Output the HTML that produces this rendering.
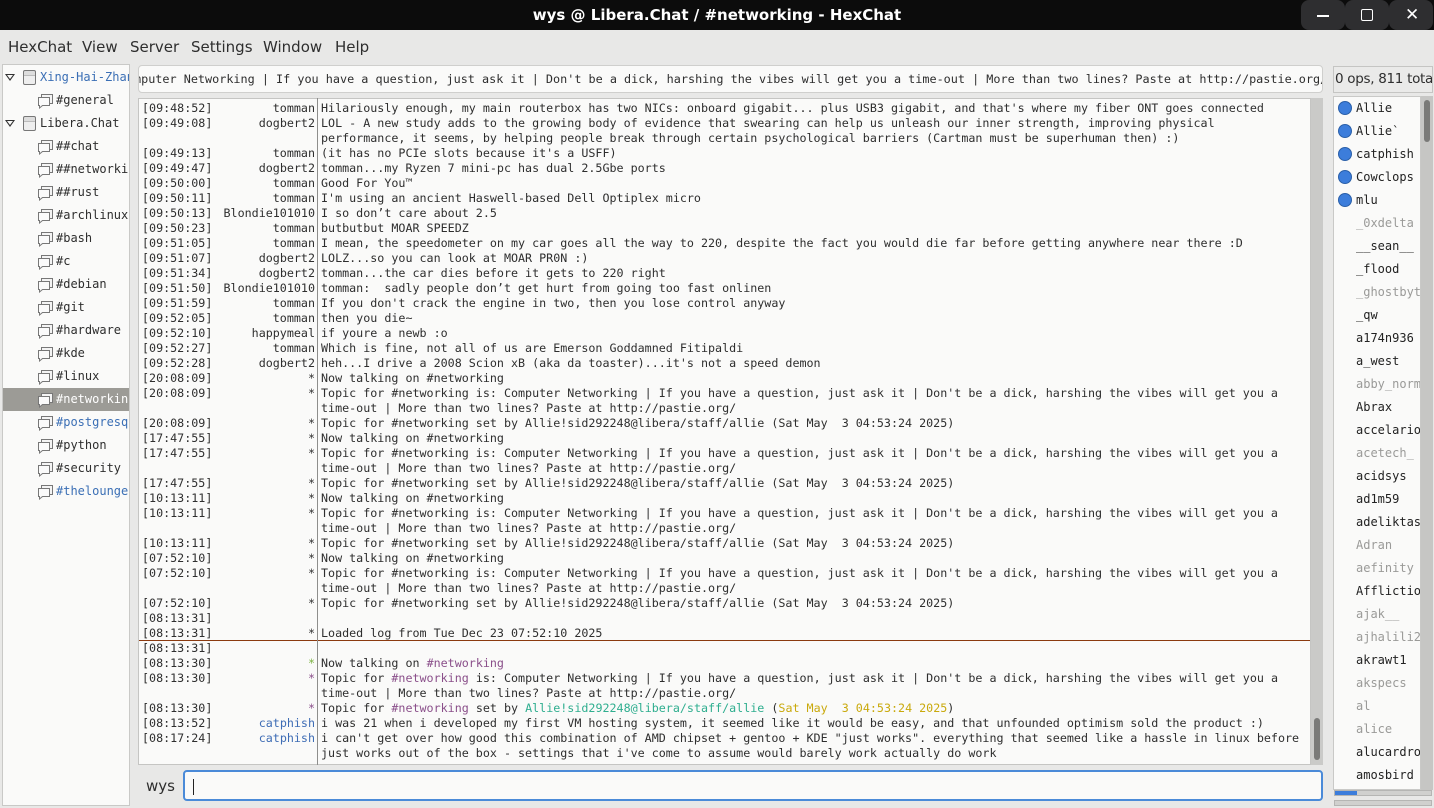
<!DOCTYPE html>
<html><head><meta charset="utf-8">
<style>
*{box-sizing:border-box;margin:0;padding:0}
body{width:1434px;height:808px;background:#e8e8e7;position:relative;overflow:hidden;font-family:"DejaVu Sans","Liberation Sans",sans-serif;color:#2e2e2e}
.abs{position:absolute}
.mono{font-family:"DejaVu Sans Mono","Liberation Mono",monospace;font-size:11.7px;white-space:pre}
#title{left:0;top:0;width:1434px;height:30px;background:#0c0c0c;color:#fff;font-size:15px;font-weight:bold;text-align:center;line-height:30px}
.wb{top:0;width:44px;height:30px;background:#2e2e30;border-radius:8px}
#menu{top:31px;left:0;width:1434px;height:32px;font-size:15px;line-height:32px}
#menu span{position:absolute;top:0}
#tree{left:2px;top:64px;width:128px;height:742px;background:#fafaf9;border:1px solid #c9c9c7;overflow:hidden}
.tr{position:absolute;left:0;width:126px;height:23px;line-height:23px;font-family:"DejaVu Sans Mono",monospace;font-size:12px;white-space:nowrap;overflow:hidden}
.bub{position:absolute;left:34px;top:4px}
#topic{left:138px;top:65px;width:1185px;height:28px;background:#fafaf9;border:1px solid #cfcfcd;border-radius:4px;line-height:27px;overflow:hidden}
#chat{left:138px;top:98px;width:1173px;height:667px;background:#fafaf9;border:1px solid #c5c5c3;overflow:hidden}
#vsep{left:317px;top:98px;width:1px;height:667px;background:#8e8e8c}
#csb{left:1311px;top:98px;width:12px;height:667px;background:#cacac8}
.row{position:absolute;left:0;width:1171px;height:15px;line-height:15px}
.t{position:absolute;left:3px}
.n{position:absolute;right:995px;text-align:right}
.m{position:absolute;left:182px}
#ulist{left:1333px;top:96px;width:88px;height:694px;background:#fafaf9;border:1px solid #c9c9c7;overflow:hidden}
.u{position:absolute;left:22px;height:23px;line-height:23px;font-family:"DejaVu Sans Mono",monospace;font-size:12px;white-space:nowrap}
.dot{position:absolute;left:4px;width:14px;height:14px;border-radius:50%;background:#3c7ddb;border:1px solid #2a5fa8}
.g{color:#9a9a98}.k{color:#222}
.arr{position:absolute;left:2px;top:8px;width:0;height:0;border-left:5px solid transparent;border-right:5px solid transparent;border-top:7px solid #333}
.arr::after{content:"";position:absolute;left:-3px;top:-6px;border-left:3px solid transparent;border-right:3px solid transparent;border-top:4px solid #fafaf9}
.srv{position:absolute;left:20px;top:4px;width:13px;height:15px;border:1px solid #777;border-radius:2px;background:linear-gradient(#ddd 0 4px,#bbb 4px 5px,#eee 5px)}
</style></head><body>
<div id="title" class="abs">wys @ Libera.Chat / #networking - HexChat</div>
<div class="abs wb" style="left:1301px"></div><div class="abs wb" style="left:1345px"></div><div class="abs wb" style="left:1389px"></div>
<div class="abs" style="left:1317px;top:15px;width:12px;height:1.5px;background:#fff"></div>
<div class="abs" style="left:1361px;top:9px;width:12px;height:12px;border:1.5px solid #fff;border-radius:2px"></div>
<div class="abs" style="left:1405px;top:5px;color:#fff;font-size:17px;line-height:20px">✕</div>
<div id="menu" class="abs"><span style="left:8px">HexChat</span><span style="left:82px">View</span><span style="left:130px">Server</span><span style="left:191px">Settings</span><span style="left:263px">Window</span><span style="left:335px">Help</span></div>

<svg width="0" height="0" style="position:absolute"><defs><symbol id="b" viewBox="0 0 17 16"><path d="M4.5 1.5h11v9h-11z" fill="#f4f4f4" stroke="#777"/><path d="M1.5 4.5h11v8h-7l-3 2.5v-2.5h-1z" fill="#fafafa" stroke="#777"/></symbol></defs></svg>

<div id="tree" class="abs">
<div class="tr" style="top:1px"><div class="arr"></div><div class="srv"></div><span class="abs" style="left:37px;color:#3b6fb5">Xing-Hai-Zhang</span></div>
<div class="tr" style="top:24px"><svg class="bub" width="17" height="16"><use href="#b"/></svg><span class="abs" style="left:53px">#general</span></div>
<div class="tr" style="top:47px"><div class="arr"></div><div class="srv"></div><span class="abs" style="left:37px">Libera.Chat</span></div>
<div class="tr" style="top:70px"><svg class="bub" width="17" height="16"><use href="#b"/></svg><span class="abs" style="left:53px">##chat</span></div>
<div class="tr" style="top:93px"><svg class="bub" width="17" height="16"><use href="#b"/></svg><span class="abs" style="left:53px">##networking</span></div>
<div class="tr" style="top:116px"><svg class="bub" width="17" height="16"><use href="#b"/></svg><span class="abs" style="left:53px">##rust</span></div>
<div class="tr" style="top:139px"><svg class="bub" width="17" height="16"><use href="#b"/></svg><span class="abs" style="left:53px">#archlinux</span></div>
<div class="tr" style="top:162px"><svg class="bub" width="17" height="16"><use href="#b"/></svg><span class="abs" style="left:53px">#bash</span></div>
<div class="tr" style="top:185px"><svg class="bub" width="17" height="16"><use href="#b"/></svg><span class="abs" style="left:53px">#c</span></div>
<div class="tr" style="top:208px"><svg class="bub" width="17" height="16"><use href="#b"/></svg><span class="abs" style="left:53px">#debian</span></div>
<div class="tr" style="top:231px"><svg class="bub" width="17" height="16"><use href="#b"/></svg><span class="abs" style="left:53px">#git</span></div>
<div class="tr" style="top:254px"><svg class="bub" width="17" height="16"><use href="#b"/></svg><span class="abs" style="left:53px">#hardware</span></div>
<div class="tr" style="top:277px"><svg class="bub" width="17" height="16"><use href="#b"/></svg><span class="abs" style="left:53px">#kde</span></div>
<div class="tr" style="top:300px"><svg class="bub" width="17" height="16"><use href="#b"/></svg><span class="abs" style="left:53px">#linux</span></div>
<div class="tr" style="top:323px;background:#9c9b96;color:#fff"><svg class="bub" width="17" height="16"><use href="#b"/></svg><span class="abs" style="left:53px">#networking</span></div>
<div class="tr" style="top:346px"><svg class="bub" width="17" height="16"><use href="#b"/></svg><span class="abs" style="left:53px;color:#3b6fb5">#postgresql</span></div>
<div class="tr" style="top:369px"><svg class="bub" width="17" height="16"><use href="#b"/></svg><span class="abs" style="left:53px">#python</span></div>
<div class="tr" style="top:392px"><svg class="bub" width="17" height="16"><use href="#b"/></svg><span class="abs" style="left:53px">#security</span></div>
<div class="tr" style="top:415px"><svg class="bub" width="17" height="16"><use href="#b"/></svg><span class="abs" style="left:53px;color:#3b6fb5">#thelounge</span></div>
</div>

<div id="topic" class="abs mono"><span style="position:absolute;left:-5px;top:0;font-size:11.8px">mputer Networking | If you have a question, just ask it | Don't be a dick, harshing the vibes will get you a time-out | More than two lines? Paste at http://pastie.org/</span></div>

<div id="chat" class="abs mono">
<div class="row" style="top:2px"><span class="t">[09:48:52]</span><span class="n">tomman</span><span class="m">Hilariously enough, my main routerbox has two NICs: onboard gigabit... plus USB3 gigabit, and that's where my fiber ONT goes connected</span></div>
<div class="row" style="top:17px"><span class="t">[09:49:08]</span><span class="n">dogbert2</span><span class="m">LOL - A new study adds to the growing body of evidence that swearing can help us unleash our inner strength, improving physical</span></div>
<div class="row" style="top:32px"><span class="m">performance, it seems, by helping people break through certain psychological barriers (Cartman must be superhuman then) :)</span></div>
<div class="row" style="top:47px"><span class="t">[09:49:13]</span><span class="n">tomman</span><span class="m">(it has no PCIe slots because it's a USFF)</span></div>
<div class="row" style="top:62px"><span class="t">[09:49:47]</span><span class="n">dogbert2</span><span class="m">tomman...my Ryzen 7 mini-pc has dual 2.5Gbe ports</span></div>
<div class="row" style="top:77px"><span class="t">[09:50:00]</span><span class="n">tomman</span><span class="m">Good For You™</span></div>
<div class="row" style="top:92px"><span class="t">[09:50:11]</span><span class="n">tomman</span><span class="m">I'm using an ancient Haswell-based Dell Optiplex micro</span></div>
<div class="row" style="top:107px"><span class="t">[09:50:13]</span><span class="n">Blondie101010</span><span class="m">I so don’t care about 2.5</span></div>
<div class="row" style="top:122px"><span class="t">[09:50:23]</span><span class="n">tomman</span><span class="m">butbutbut MOAR SPEEDZ</span></div>
<div class="row" style="top:137px"><span class="t">[09:51:05]</span><span class="n">tomman</span><span class="m">I mean, the speedometer on my car goes all the way to 220, despite the fact you would die far before getting anywhere near there :D</span></div>
<div class="row" style="top:152px"><span class="t">[09:51:07]</span><span class="n">dogbert2</span><span class="m">LOLZ...so you can look at MOAR PR0N :)</span></div>
<div class="row" style="top:167px"><span class="t">[09:51:34]</span><span class="n">dogbert2</span><span class="m">tomman...the car dies before it gets to 220 right</span></div>
<div class="row" style="top:182px"><span class="t">[09:51:50]</span><span class="n">Blondie101010</span><span class="m">tomman:  sadly people don’t get hurt from going too fast onlinen</span></div>
<div class="row" style="top:197px"><span class="t">[09:51:59]</span><span class="n">tomman</span><span class="m">If you don't crack the engine in two, then you lose control anyway</span></div>
<div class="row" style="top:212px"><span class="t">[09:52:05]</span><span class="n">tomman</span><span class="m">then you die~</span></div>
<div class="row" style="top:227px"><span class="t">[09:52:10]</span><span class="n">happymeal</span><span class="m">if youre a newb :o</span></div>
<div class="row" style="top:242px"><span class="t">[09:52:27]</span><span class="n">tomman</span><span class="m">Which is fine, not all of us are Emerson Goddamned Fitipaldi</span></div>
<div class="row" style="top:257px"><span class="t">[09:52:28]</span><span class="n">dogbert2</span><span class="m">heh...I drive a 2008 Scion xB (aka da toaster)...it's not a speed demon</span></div>
<div class="row" style="top:272px"><span class="t">[20:08:09]</span><span class="n">*</span><span class="m">Now talking on #networking</span></div>
<div class="row" style="top:287px"><span class="t">[20:08:09]</span><span class="n">*</span><span class="m">Topic for #networking is: Computer Networking | If you have a question, just ask it | Don't be a dick, harshing the vibes will get you a</span></div>
<div class="row" style="top:302px"><span class="m">time-out | More than two lines? Paste at http://pastie.org/</span></div>
<div class="row" style="top:317px"><span class="t">[20:08:09]</span><span class="n">*</span><span class="m">Topic for #networking set by Allie!sid292248@libera/staff/allie (Sat May  3 04:53:24 2025)</span></div>
<div class="row" style="top:332px"><span class="t">[17:47:55]</span><span class="n">*</span><span class="m">Now talking on #networking</span></div>
<div class="row" style="top:347px"><span class="t">[17:47:55]</span><span class="n">*</span><span class="m">Topic for #networking is: Computer Networking | If you have a question, just ask it | Don't be a dick, harshing the vibes will get you a</span></div>
<div class="row" style="top:362px"><span class="m">time-out | More than two lines? Paste at http://pastie.org/</span></div>
<div class="row" style="top:377px"><span class="t">[17:47:55]</span><span class="n">*</span><span class="m">Topic for #networking set by Allie!sid292248@libera/staff/allie (Sat May  3 04:53:24 2025)</span></div>
<div class="row" style="top:392px"><span class="t">[10:13:11]</span><span class="n">*</span><span class="m">Now talking on #networking</span></div>
<div class="row" style="top:407px"><span class="t">[10:13:11]</span><span class="n">*</span><span class="m">Topic for #networking is: Computer Networking | If you have a question, just ask it | Don't be a dick, harshing the vibes will get you a</span></div>
<div class="row" style="top:422px"><span class="m">time-out | More than two lines? Paste at http://pastie.org/</span></div>
<div class="row" style="top:437px"><span class="t">[10:13:11]</span><span class="n">*</span><span class="m">Topic for #networking set by Allie!sid292248@libera/staff/allie (Sat May  3 04:53:24 2025)</span></div>
<div class="row" style="top:452px"><span class="t">[07:52:10]</span><span class="n">*</span><span class="m">Now talking on #networking</span></div>
<div class="row" style="top:467px"><span class="t">[07:52:10]</span><span class="n">*</span><span class="m">Topic for #networking is: Computer Networking | If you have a question, just ask it | Don't be a dick, harshing the vibes will get you a</span></div>
<div class="row" style="top:482px"><span class="m">time-out | More than two lines? Paste at http://pastie.org/</span></div>
<div class="row" style="top:497px"><span class="t">[07:52:10]</span><span class="n">*</span><span class="m">Topic for #networking set by Allie!sid292248@libera/staff/allie (Sat May  3 04:53:24 2025)</span></div>
<div class="row" style="top:512px"><span class="t">[08:13:31]</span></div>
<div class="row" style="top:527px"><span class="t">[08:13:31]</span><span class="n">*</span><span class="m">Loaded log from Tue Dec 23 07:52:10 2025</span></div>
<div class="abs" style="left:0;top:541px;width:1173px;height:1px;background:#8b3a0f"></div>
<div class="row" style="top:542px"><span class="t">[08:13:31]</span></div>
<div class="row" style="top:557px"><span class="t">[08:13:30]</span><span class="n" style="color:#7cb342">*</span><span class="m">Now talking on <span style="color:#8a4f8a">#networking</span></span></div>
<div class="row" style="top:572px"><span class="t">[08:13:30]</span><span class="n" style="color:#8a4f8a">*</span><span class="m">Topic for <span style="color:#8a4f8a">#networking</span> is: Computer Networking | If you have a question, just ask it | Don't be a dick, harshing the vibes will get you a</span></div>
<div class="row" style="top:587px"><span class="m">time-out | More than two lines? Paste at http://pastie.org/</span></div>
<div class="row" style="top:602px"><span class="t">[08:13:30]</span><span class="n" style="color:#8a4f8a">*</span><span class="m">Topic for <span style="color:#8a4f8a">#networking</span> set by <span style="color:#2fae8f">Allie!sid292248@libera/staff/allie</span> (<span style="color:#c9a90c">Sat May  3 04:53:24 2025</span>)</span></div>
<div class="row" style="top:617px"><span class="t">[08:13:52]</span><span class="n" style="color:#3f6db5">catphish</span><span class="m">i was 21 when i developed my first VM hosting system, it seemed like it would be easy, and that unfounded optimism sold the product :)</span></div>
<div class="row" style="top:632px"><span class="t">[08:17:24]</span><span class="n" style="color:#3f6db5">catphish</span><span class="m">i can't get over how good this combination of AMD chipset + gentoo + KDE "just works". everything that seemed like a hassle in linux before</span></div>
<div class="row" style="top:647px"><span class="m">just works out of the box - settings that i've come to assume would barely work actually do work</span></div>
</div>
<div id="vsep" class="abs"></div>
<div id="csb" class="abs"><div class="abs" style="left:3px;top:620px;width:6px;height:42px;background:#7a7a78;border-radius:3px"></div></div>

<div class="abs" style="left:146px;top:777px;font-size:15px">wys</div>
<div class="abs" style="left:183px;top:770px;width:1140px;height:31px;background:#fafaf9;border:2px solid #4a8ad8;border-radius:4px"><div class="abs" style="left:8px;top:7px;width:1px;height:16px;background:#222"></div></div>

<div class="abs" style="left:1333px;top:66px;width:100px;height:27px;background:#eaeae9;border:1px solid #c5c5c3;font-size:13.5px;line-height:25px;padding-left:1px;white-space:nowrap;overflow:hidden;letter-spacing:-0.3px">0 ops, 811 total</div>
<div id="ulist" class="abs">
<div class="dot" style="top:4px"></div><div class="u k" style="top:0">Allie</div>
<div class="dot" style="top:27px"></div><div class="u k" style="top:23px">Allie`</div>
<div class="dot" style="top:50px"></div><div class="u k" style="top:46px">catphish</div>
<div class="dot" style="top:73px"></div><div class="u k" style="top:69px">Cowclops</div>
<div class="dot" style="top:96px"></div><div class="u k" style="top:92px">mlu</div>
<div class="u g" style="top:115px">_0xdelta</div>
<div class="u k" style="top:138px">__sean__</div>
<div class="u k" style="top:161px">_flood</div>
<div class="u g" style="top:184px">_ghostbyte</div>
<div class="u k" style="top:207px">_qw</div>
<div class="u k" style="top:230px">a174n936</div>
<div class="u k" style="top:253px">a_west</div>
<div class="u g" style="top:276px">abby_norm</div>
<div class="u k" style="top:299px">Abrax</div>
<div class="u k" style="top:322px">accelario</div>
<div class="u g" style="top:345px">acetech_</div>
<div class="u k" style="top:368px">acidsys</div>
<div class="u k" style="top:391px">ad1m59</div>
<div class="u k" style="top:414px">adeliktas</div>
<div class="u g" style="top:437px">Adran</div>
<div class="u g" style="top:460px">aefinity</div>
<div class="u k" style="top:483px">Afflictio</div>
<div class="u g" style="top:506px">ajak__</div>
<div class="u g" style="top:529px">ajhalili2</div>
<div class="u k" style="top:552px">akrawt1</div>
<div class="u g" style="top:575px">akspecs</div>
<div class="u g" style="top:598px">al</div>
<div class="u g" style="top:621px">alice</div>
<div class="u k" style="top:644px">alucardro</div>
<div class="u k" style="top:667px">amosbird</div>
</div>
<div class="abs" style="left:1421px;top:96px;width:12px;height:694px;background:#c6c6c4"><div class="abs" style="left:3px;top:4px;width:6px;height:42px;background:#7a7a78;border-radius:3px"></div></div>
<div class="abs" style="left:1334px;top:790px;width:98px;height:6px;background:#d0d0ce;border:1px solid #b5b5b3"></div>
<div class="abs" style="left:1335px;top:791px;width:22px;height:4px;background:#3c7ddb"></div>
<div class="abs" style="left:1334px;top:800px;width:98px;height:6px;background:#d0d0ce;border:1px solid #b5b5b3"></div>
</body></html>
